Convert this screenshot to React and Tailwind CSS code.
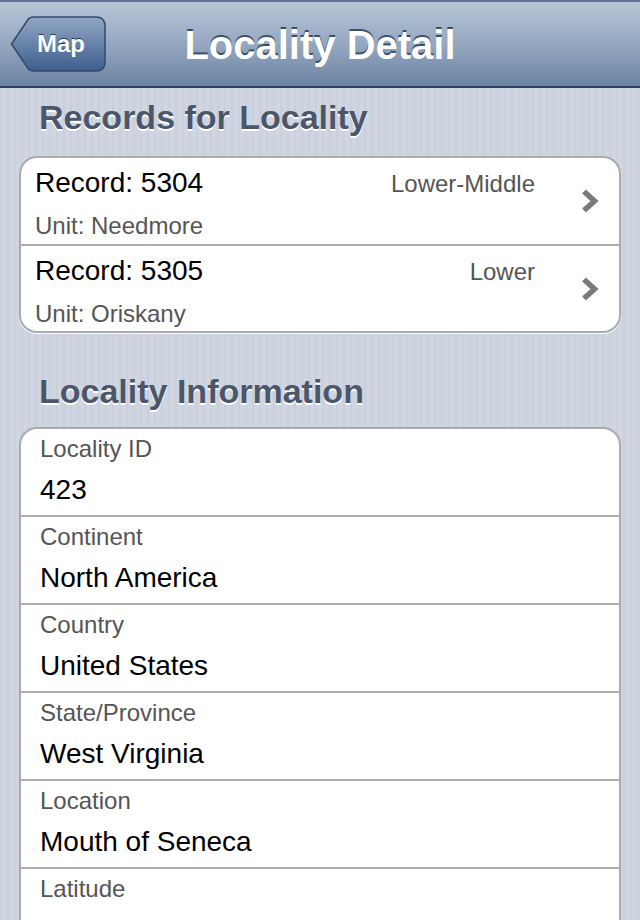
import React from 'react';

const records = [
  { id: 5304, level: 'Lower-Middle', unit: 'Needmore' },
  { id: 5305, level: 'Lower', unit: 'Oriskany' },
];

const info = [
  { label: 'Locality ID', value: '423' },
  { label: 'Continent', value: 'North America' },
  { label: 'Country', value: 'United States' },
  { label: 'State/Province', value: 'West Virginia' },
  { label: 'Location', value: 'Mouth of Seneca' },
  { label: 'Latitude', value: '\u00a0' },
];

const BackButton = () => (
  <button className="relative w-[96px] h-[56px] flex items-center pl-[27px] text-white font-bold text-[24px] leading-none [text-shadow:0_-1px_0_#22344f]">
    <svg className="absolute inset-0" width="96" height="56" viewBox="0 0 96 56">
      <defs>
        <linearGradient id="bb" x1="0" y1="0" x2="0" y2="1">
          <stop offset="0" stopColor="#91a6c4" />
          <stop offset="0.5" stopColor="#6883aa" />
          <stop offset="1" stopColor="#3e5d8c" />
        </linearGradient>
      </defs>
      <path
        d="M1.5 28 L18 3.5 Q20 1 24 1 L86 1 Q95 1 95 10 L95 46 Q95 55 86 55 L24 55 Q20 55 18 52.5 Z"
        fill="url(#bb)"
        stroke="#34496a"
        strokeWidth="1.5"
      />
    </svg>
    <span className="relative">Map</span>
  </button>
);

const Chevron = () => (
  <svg width="18" height="26" viewBox="0 0 18 26">
    <path d="M3 3.5 L13.5 13 L3 22.5" fill="none" stroke="#7a7a7a" strokeWidth="5.5" strokeLinejoin="miter" />
  </svg>
);

const App = () => {
  return (
    <div className="w-[640px] h-[920px] overflow-hidden [font-family:'Liberation_Sans',Arial,sans-serif] bg-[repeating-linear-gradient(90deg,#c9d0dc_0px,#c9d0dc_2px,#d0d6e1_2px,#d0d6e1_7px)]">
      {/* nav bar */}
      <div className="h-[88px] grid grid-cols-[1fr_auto_1fr] items-center px-[10px] bg-[linear-gradient(#b8c6d7,#95a8c1_50%,#6b82a2)] border-t-2 border-t-[#5f7492] border-b-2 border-b-[#2d3f5a]">
        <div className="flex">
          <BackButton />
        </div>
        <h1 className="text-white font-bold text-[40px] leading-[46px] pt-[2px] [text-shadow:0_-2px_0_#3c4d68]">Locality Detail</h1>
        <div />
      </div>

      <div className="px-[19px]">
        <h2 className="mt-[9px] mb-[19px] pl-[20px] text-[34px] leading-[40px] font-bold text-[#4c566b] [text-shadow:0_2px_0_#ffffff]">
          Records for Locality
        </h2>
        <div className="bg-white border-2 border-[#a9abae] rounded-[18px] overflow-hidden shadow-[0_1px_0_#ffffff]">
          {records.map((r, i) => (
            <div
              key={r.id}
              className={`flex items-center ${i < records.length - 1 ? 'h-[88px] border-b-2 border-[#acadaf]' : 'h-[85px]'}`}
            >
              <div className="flex-1 self-start pt-[9px] pl-[14px]">
                <div className="flex items-baseline justify-between">
                  <span className="text-[28px] leading-[32px] text-black">Record: {r.id}</span>
                  <span className="text-[24px] leading-[28px] text-[#555555]">{r.level}</span>
                </div>
                <div className="mt-[13px] text-[24px] leading-[28px] text-[#555555]">Unit: {r.unit}</div>
              </div>
              <div className="w-[84px] flex justify-end pr-[20px]">
                <Chevron />
              </div>
            </div>
          ))}
        </div>

        <h2 className="mt-[38px] mb-[16px] pl-[20px] text-[34px] leading-[40px] font-bold text-[#4c566b] [text-shadow:0_2px_0_#ffffff]">
          Locality Information
        </h2>
        <div className="bg-white border-2 border-[#a9abae] rounded-[18px] overflow-hidden">
          {info.map((f, i) => (
            <div
              key={f.label}
              className={`h-[88px] pt-[6px] pl-[19px] ${i < info.length - 1 ? 'border-b-2 border-[#acadaf]' : ''}`}
            >
              <div className="text-[24px] leading-[28px] text-[#555555]">{f.label}</div>
              <div className="mt-[11px] text-[28px] leading-[32px] text-black">{f.value}</div>
            </div>
          ))}
        </div>
      </div>
    </div>
  );
};

export default App;
